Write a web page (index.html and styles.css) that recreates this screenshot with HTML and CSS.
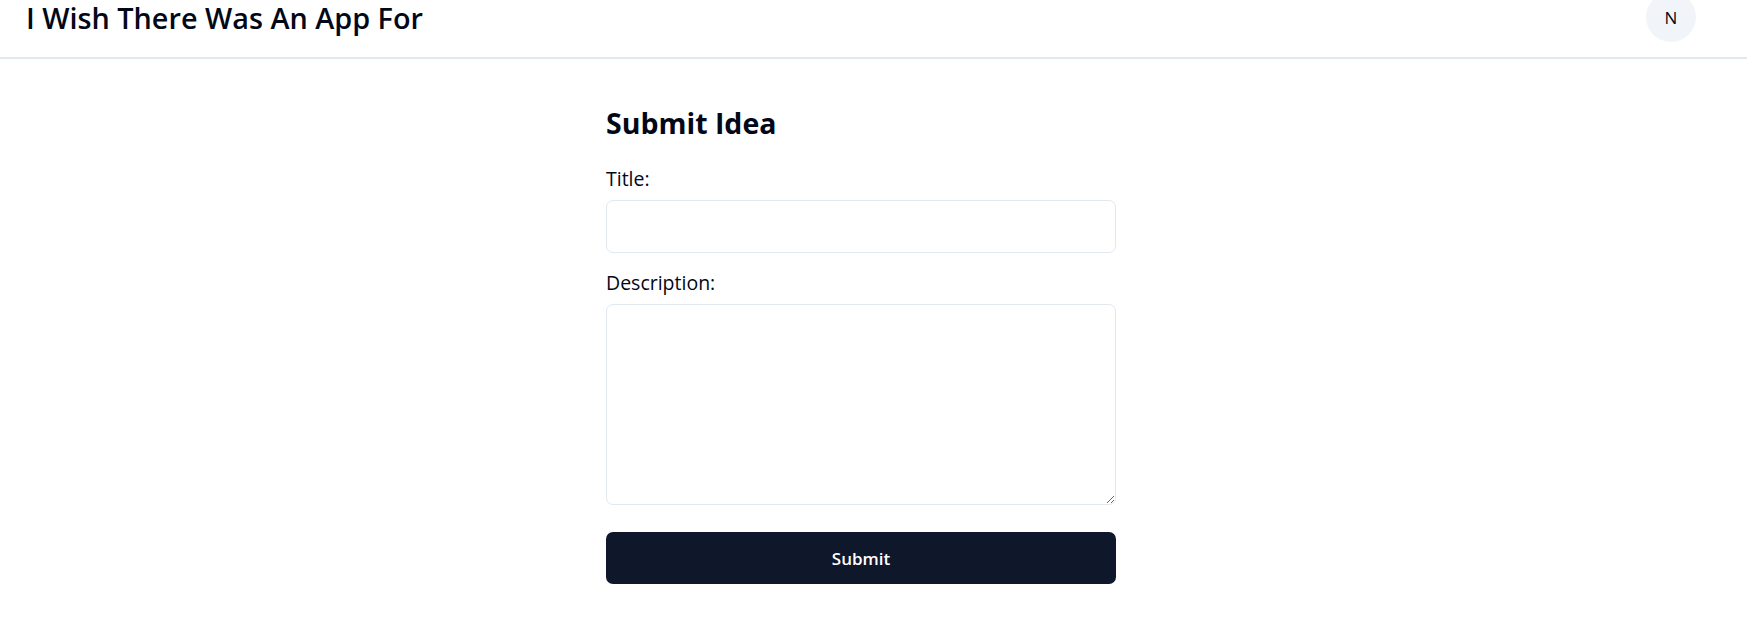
FILE: index.html
```html
<!DOCTYPE html>
<html lang="en">
<head>
  <meta charset="UTF-8">
  <title>I Wish There Was An App For</title>
  <link rel="stylesheet" href="styles.css">
</head>
<body>

  <header class="topbar">
    <h1 class="brand">I Wish There Was An App For</h1>
    <div class="avatar">N</div>
  </header>

  <main class="page">
    <form class="idea-form">
      <h2>Submit Idea</h2>

      <label for="title">Title:</label>
      <input type="text" id="title">

      <label for="description">Description:</label>
      <textarea id="description"></textarea>

      <button type="submit">Submit</button>
    </form>
  </main>

</body>
</html>
```

FILE: styles.css
```css
body {
  margin: 0;
  padding: 0;
  background: #fff;
  color: #020817;
  font-family: 'Open Sans', sans-serif;
}
.topbar {
  display: flex;
  align-items: center;
  justify-content: space-between;
  height: 50px;
  margin-top: -8px;
  padding: 0 51px 15px 26px;
  border-bottom: 2px solid #e2e8f0;
}
.brand {
  margin: 2px 0 0;
  font-size: 28.8px;
  font-weight: 600;
  line-height: 30px;
  color: #020817;
}
.avatar {
  width: 50px;
  height: 50px;
  border-radius: 50%;
  background: #f1f5f9;
  display: flex;
  align-items: center;
  justify-content: center;
  font-size: 17px;
}
.page {
  display: flex;
  justify-content: center;
  padding: 46px 25px 0 0;
}
.idea-form {
  width: 510px;
  display: flex;
  flex-direction: column;
}
h2 {
  margin: 0 0 24px;
  font-size: 28.5px;
  font-weight: 700;
  line-height: 36px;
}
label {
  font-size: 19.5px;
  line-height: 28px;
  margin-bottom: 7px;
}
input, textarea {
  box-sizing: border-box;
  width: 100%;
  border: 1px solid #e2e8f0;
  border-radius: 7px;
  font-family: inherit;
  font-size: 18px;
  padding: 8px 14px;
  outline: none;
  margin-bottom: 16px;
}
input {
  height: 53px;
}
textarea {
  height: 201px;
  margin-bottom: 27px;
}
button {
  height: 52px;
  border: none;
  border-radius: 7px;
  background: #0f172a;
  color: #fff;
  font-family: inherit;
  font-size: 17px;
  font-weight: 600;
  cursor: pointer;
}
```
